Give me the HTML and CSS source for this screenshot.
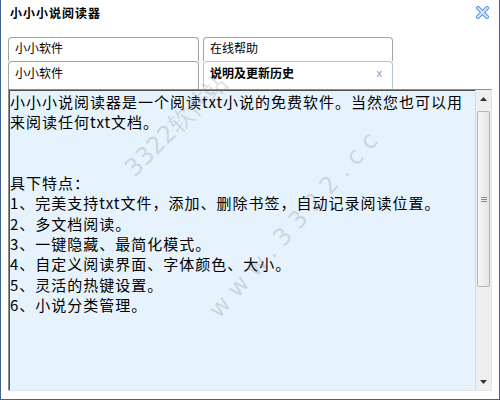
FILE: index.html
```html
<!DOCTYPE html>
<html>
<head>
<meta charset="utf-8">
<link rel="stylesheet" href="styles.css">
</head>
<body>
<div class="window">
  <div class="titlebar">
    <span class="title">小小小说阅读器</span>
    <svg class="close" width="13" height="13" viewBox="0 0 13 13">
      <path d="M2 2 L11 11 M11 2 L2 11" stroke="#5b8fdc" stroke-width="4" stroke-linecap="square"/>
      <path d="M2 2 L11 11 M11 2 L2 11" stroke="#d6e5fb" stroke-width="2" stroke-linecap="square"/>
    </svg>
  </div>
  <div class="tabrow back">
    <div class="tab wide">小小软件</div>
    <div class="tab">在线帮助</div>
  </div>
  <div class="tabrow front">
    <div class="tab wide">小小软件</div>
    <div class="tab active"><span class="bold">说明及更新历史</span><span class="x">x</span></div>
  </div>
  <div class="content">
    <div class="text">小小小说阅读器是一个阅读txt小说的免费软件。当然您也可以用<br>来阅读任何txt文档。<br><br><br>具下特点：<br>1、完美支持txt文件，添加、删除书签，自动记录阅读位置。<br>2、多文档阅读。<br>3、一键隐藏、最简化模式。<br>4、自定义阅读界面、字体颜色、大小。<br>5、灵活的热键设置。<br>6、小说分类管理。</div>
    <div class="scrollbar">
      <div class="sbtn"><svg width="7" height="4" viewBox="0 0 7 4"><path d="M0 4 L3.5 0 L7 4Z" fill="#333"/></svg></div>
      <div class="thumb"><span class="grip"></span></div>
      <div class="track"></div>
      <div class="sbtn"><svg width="7" height="4" viewBox="0 0 7 4"><path d="M0 0 L3.5 4 L7 0Z" fill="#333"/></svg></div>
    </div>
  </div>
  <div class="wm wm1">3322软件站</div>
  <div class="wm wm2">www.3322.cc</div>
</div>
</body>
</html>
```
FILE: styles.css
```css
* { box-sizing: border-box; }
html, body { margin: 0; padding: 0; background: #fff; }
.window {
  position: relative;
  width: 500px;
  height: 400px;
  border: 1px solid #3f6296;
  border-top: none;
  padding: 0 7px 8px 7px;
  display: flex;
  flex-direction: column;
  overflow: hidden;
  font-family: "Noto Sans CJK SC", sans-serif;
  color: #000;
  background: #fff;
}
.titlebar {
  height: 37px;
  display: flex;
  justify-content: space-between;
  align-items: flex-start;
  padding: 6px 3px 0 2px;
}
.title {
  font-size: 12px;
  line-height: 14px;
  font-weight: bold;
  letter-spacing: 1px;
}
.close { margin-top: 0px; }
.tabrow {
  display: flex;
  gap: 4px;
}
.tabrow.back { height: 24px; }
.tabrow.front { height: 28px; }
.tab {
  width: 190px;
  border: 1px solid #a3a3a3;
  border-bottom: none;
  border-radius: 4px 4px 0 0;
  font-size: 12px;
  line-height: 14px;
  padding: 3px 6px 0 6px;
  background: #fff;
}
.tab.wide { width: 191px; }
.front .tab { padding-top: 4px; }
.tab.active {
  border-color: #abcad6;
  display: flex;
  justify-content: space-between;
}
.bold { font-weight: bold; }
.x {
  color: #7f9cb6;
  font-family: "Liberation Sans", sans-serif;
  font-size: 11px;
  padding-right: 4px;
}
.content {
  flex: 1;
  display: flex;
  background: #e6f3fd;
  border-left: 1px solid #8d8d8d;
  border-top: 1px solid #8d8d8d;
  border-right: 1px solid #e4e4e4;
  border-bottom: 1px solid #e4e4e4;
  box-shadow: inset 1px 1px 0 #505050;
}
.text {
  flex: 1;
  padding: 2px 0 0 1px;
  font-size: 15px;
  letter-spacing: 1px;
  line-height: 20.3px;
  white-space: nowrap;
  overflow: hidden;
}
.scrollbar {
  width: 16px;
  display: flex;
  flex-direction: column;
  background: #efefef;
  border-left: 1px solid #dadada;
}
.sbtn {
  height: 17px;
  display: flex;
  align-items: center;
  justify-content: center;
}
.thumb {
  margin: 4px 1px 0 1px;
  height: 176px;
  border: 1px solid #b5b5b5;
  border-radius: 2px;
  background: linear-gradient(to right, #f6f6f6, #e4e4e4);
  display: flex;
  align-items: center;
  justify-content: center;
}
.grip {
  width: 6px;
  height: 5px;
  border-top: 1px solid #888;
  border-bottom: 1px solid #888;
  background: linear-gradient(#888, #888) center / 100% 1px no-repeat;
}
.track { flex: 1; }
.wm {
  position: absolute;
  color: rgba(150, 150, 150, 0.33);
  font-family: "DejaVu Sans", sans-serif;
  white-space: nowrap;
  transform-origin: 0 50%;
  pointer-events: none;
}
.wm1 {
  left: 128px;
  top: 156px;
  font-size: 24px;
  transform: rotate(-45deg);
}
.wm2 {
  left: 212px;
  top: 300px;
  font-size: 24px;
  letter-spacing: 8px;
  transform: rotate(-48deg);
}
```
